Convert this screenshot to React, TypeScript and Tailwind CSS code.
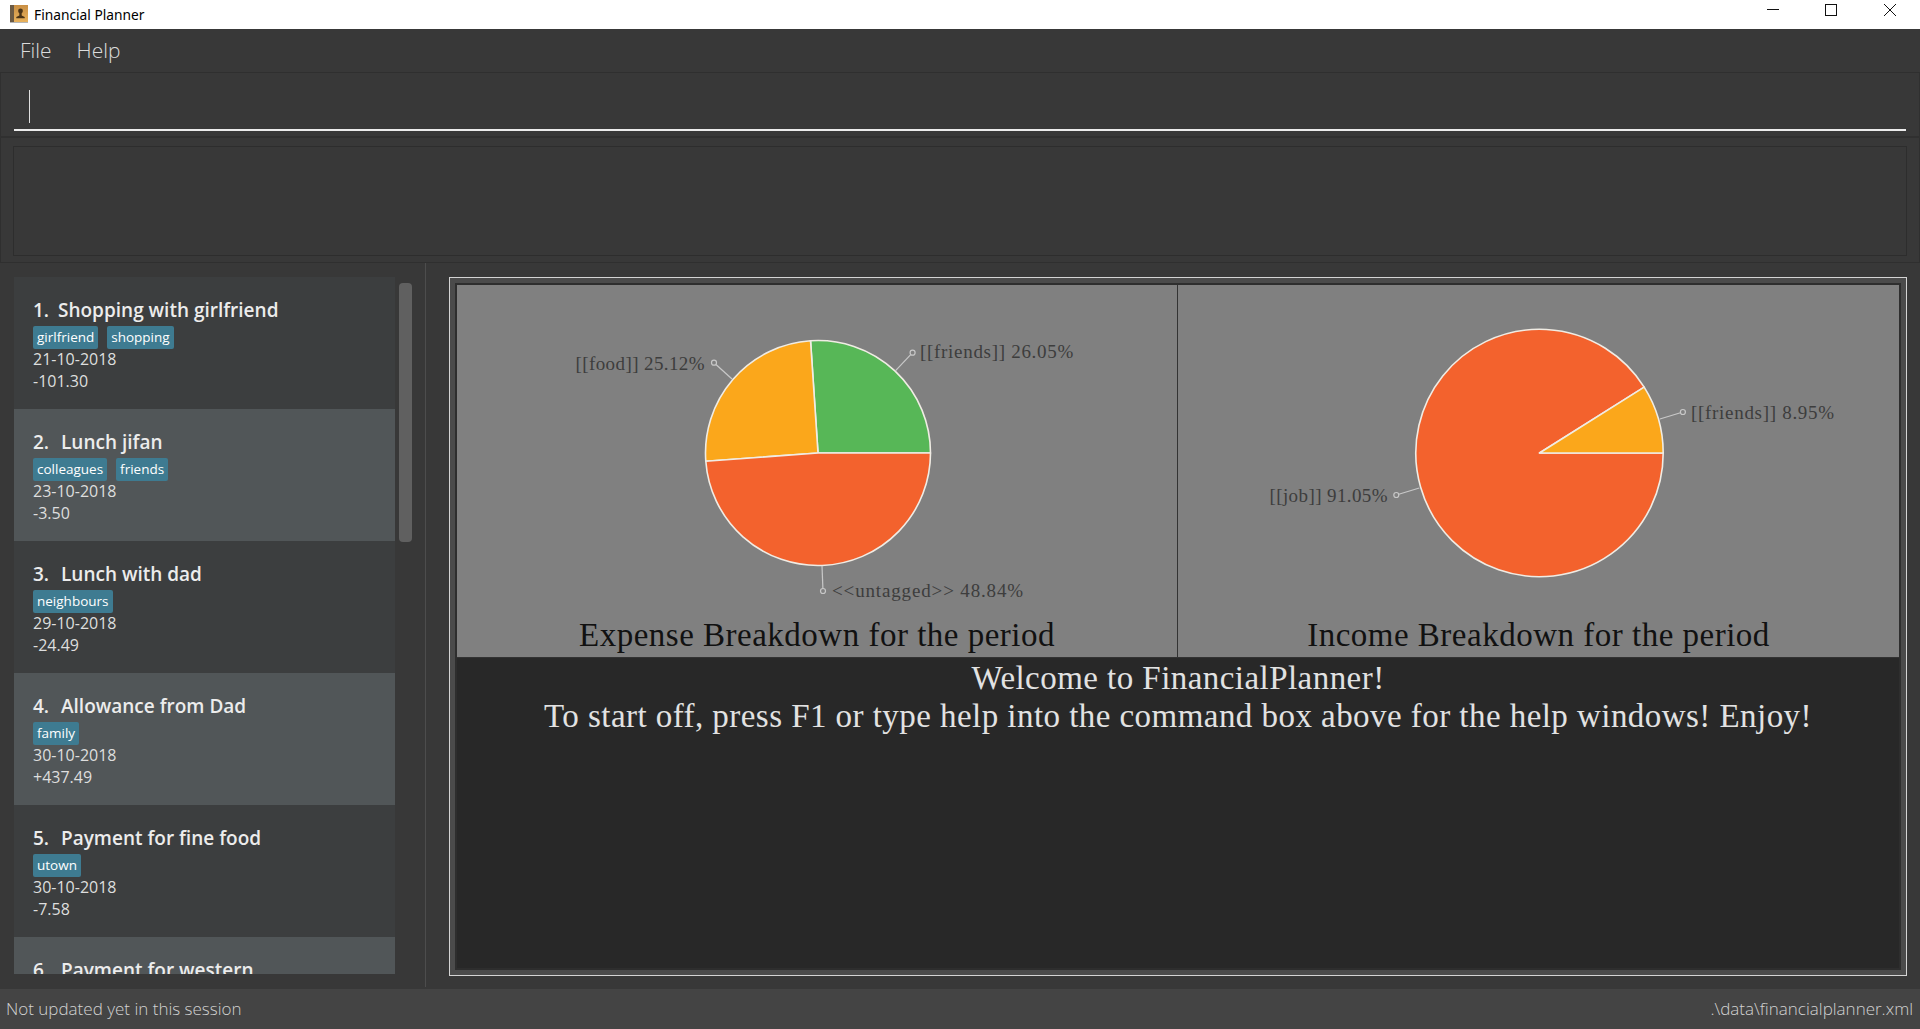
import React from "react";

const ui = "font-['Open_Sans','Noto_Sans',sans-serif]";
const rows: { t: string; tags: string[]; d?: string; a?: string }[] = [
  { t: "Shopping with girlfriend", tags: ["girlfriend", "shopping"], d: "21-10-2018", a: "-101.30" },
  { t: "Lunch jifan", tags: ["colleagues", "friends"], d: "23-10-2018", a: "-3.50" },
  { t: "Lunch with dad", tags: ["neighbours"], d: "29-10-2018", a: "-24.49" },
  { t: "Allowance from Dad", tags: ["family"], d: "30-10-2018", a: "+437.49" },
  { t: "Payment for fine food", tags: ["utown"], d: "30-10-2018", a: "-7.58" },
  { t: "Payment for western", tags: [] },
];

function pt(cx: number, cy: number, r: number, deg: number) {
  const a = (deg * Math.PI) / 180;
  return [cx + r * Math.cos(a), cy - r * Math.sin(a)];
}
function Slice({ cx, cy, r, from, to, fill }: { cx: number; cy: number; r: number; from: number; to: number; fill: string }) {
  const [x1, y1] = pt(cx, cy, r, from);
  const [x2, y2] = pt(cx, cy, r, to);
  const large = to - from > 180 ? 1 : 0;
  return <path d={`M${cx} ${cy}L${x1} ${y1}A${r} ${r} 0 ${large} 0 ${x2} ${y2}Z`} fill={fill} stroke="#f0ece4" strokeWidth="1.6" strokeLinejoin="round" />;
}
function Leader({ x1, y1, x2, y2 }: { x1: number; y1: number; x2: number; y2: number }) {
  return (
    <g>
      <line x1={x1} y1={y1} x2={x2} y2={y2} stroke="#c8c8c8" strokeWidth="1.2" />
      <circle cx={x1} cy={y1} r="2.5" fill="#808080" stroke="#c8c8c8" strokeWidth="1.2" />
    </g>
  );
}
function Label({ x, y, end, ls = 0.7, children }: { x: number; y: number; end?: boolean; ls?: number; children: string }) {
  return (
    <text x={x} y={y} fill="#3d3d3d" fontSize="19" letterSpacing={ls} textAnchor={end ? "end" : "start"} fontFamily="'Liberation Serif', serif">
      {children}
    </text>
  );
}

function ChartTitle({ children }: { children: string }) {
  return (
    <div className="h-[46px] flex items-center justify-center text-[33px] leading-none tracking-[0.5px] text-[#111111] font-['Liberation_Serif',serif]">
      {children}
    </div>
  );
}

export default function App() {
  return (
    <div className={`h-[1029px] w-[1920px] overflow-hidden flex flex-col bg-[#383838] ${ui}`}>
      {/* title bar */}
      <div className="h-[29px] bg-white flex items-center relative shrink-0">
        <svg className="ml-[10px] mb-[2px]" width="18" height="18" viewBox="0 0 18 18">
          <defs>
            <linearGradient id="g" x1="0" y1="0" x2="0" y2="1">
              <stop offset="0" stopColor="#c98f44" />
              <stop offset="1" stopColor="#e9b25c" />
            </linearGradient>
          </defs>
          <rect x="0" y="0" width="18" height="17" fill="url(#g)" />
          <rect x="0" y="0" width="4" height="17" fill="#6b5a45" />
          <rect x="0" y="17" width="18" height="1" fill="#b5b5b5" />
          <circle cx="10.5" cy="6" r="2.4" fill="#4a3418" />
          <path d="M9.3 8h2.4v2.4l3 1.6v1.2H6.3V12l3-1.6z" fill="#4a3418" />
        </svg>
        <span className="ml-[6px] text-[13.75px] text-black leading-none font-['Noto_Sans',sans-serif]">Financial Planner</span>
        <div className="ml-auto flex items-center h-full">
          <svg width="180" height="29" viewBox="1740 0 180 29" fill="none" stroke="#111" strokeWidth="1" shapeRendering="crispEdges">
            <path d="M1767 9.5h12" />
            <rect x="1825.5" y="4.5" width="11" height="11" />
            <path d="M1884 4l12 12M1896 4l-12 12" shapeRendering="auto" />
          </svg>
        </div>
      </div>

      {/* menu */}
      <div className="h-[44px] shrink-0 flex items-center pl-[20px] gap-[25px] text-[21px] font-light text-[#dcdcdc] border-b border-[#2f2f2f]">
        <span>File</span>
        <span>Help</span>
      </div>

      {/* command box */}
      <div className="h-[65px] shrink-0 border-b-2 border-l border-r border-[#303030] pl-[13px] pr-[13px] pt-[17px]">
        <div className="h-[41px] border-b-2 border-[#ececec]">
          <div className="ml-[15px] w-px h-[33px] bg-[#e0e0e0]" />
        </div>
      </div>

      {/* result */}
      <div className="h-[125px] shrink-0 border-b border-l border-r border-[#2f2f2f] px-[12px] pt-[8px]">
        <div className="h-[110px] border border-[#2d2d2d]" />
      </div>

      {/* split */}
      <div className="flex-1 min-h-0 flex">
        <div className="w-[426px] shrink-0 pl-[14px] pt-[14px] flex border-r border-[#4d4d4d] mb-[2px]">
          <div className="w-[381px] h-[697px] overflow-hidden shrink-0">
            {rows.map((r, i) => (
              <div key={i} className={`h-[132px] pl-[19px] pt-[20px] ${i % 2 ? "bg-[#515658]" : "bg-[#3c3e3f]"}`}>
                <div className="h-[26px] leading-[26px] text-[19px] font-semibold text-[#ececec] flex">
                  <span className={i === 0 ? "w-[25px] shrink-0" : "w-[28px] shrink-0"}>{`${i + 1}.`}</span>
                  <span>{r.t}</span>
                </div>
                {r.tags.length > 0 && (
                  <div className="flex gap-[9px] mt-[3px]">
                    {r.tags.map((t) => (
                      <span key={t} className="h-[23px] px-[4px] leading-[22px] text-[13.5px] rounded-[2px] bg-[#3e7b91] text-white">
                        {t}
                      </span>
                    ))}
                  </div>
                )}
                {r.d && <div className="h-[21px] leading-[21px] text-[16px] text-[#dedede]">{r.d}</div>}
                {r.a && <div className="h-[22px] leading-[22px] text-[16px] text-[#dedede]">{r.a}</div>}
              </div>
            ))}
          </div>
          <div className="ml-[4px] mt-[6px] w-[13px] h-[259px] rounded-[4px] bg-[#606060]" />
        </div>

        <div className="flex-1 min-w-0 pl-[23px] pr-[13px] pt-[14px] pb-[13px]">
          <div className="h-full border border-[#d4d4d4] bg-[#4b4b4b] p-[5px]">
            <div className="h-full border-2 border-[#2e2e2e] flex flex-col bg-[#282828]">
              <div className="grid grid-cols-2 h-[373px] shrink-0 bg-[#808080] border-b border-[#333333]">
                <div className="flex flex-col border-r border-[#333333] min-w-0">
                  <svg className="block" width="719" height="327" viewBox="457 285 719 327">
                    <Slice cx={818} cy={453} r={112.5} from={0} to={93.8} fill="#57b757" />
                    <Slice cx={818} cy={453} r={112.5} from={93.8} to={184.2} fill="#fba71b" />
                    <Slice cx={818} cy={453} r={112.5} from={184.2} to={360} fill="#f3622d" />
                    <Leader x1={912.6} y1={352.7} x2={895.6} y2={370.7} />
                    <Leader x1={714} y1={362.7} x2={732} y2={379} />
                    <Leader x1={823} y1={591} x2={822} y2={566} />
                    <Label x={920} y={358}>[[friends]] 26.05%</Label>
                    <Label x={705} y={370} end ls={0.4}>[[food]] 25.12%</Label>
                    <Label x={832} y={597} ls={0.85}>{"<<untagged>> 48.84%"}</Label>
                  </svg>
                  <ChartTitle>Expense Breakdown for the period</ChartTitle>
                </div>
                <div className="flex flex-col min-w-0">
                  <svg className="block" width="720" height="327" viewBox="1178.5 285 720 327">
                    <Slice cx={1540} cy={453} r={123.7} from={32.2} to={360} fill="#f3622d" />
                    <Slice cx={1540} cy={453} r={123.7} from={0} to={32.2} fill="#fba71b" />
                    <Leader x1={1683.4} y1={412} x2={1660.4} y2={419} />
                    <Leader x1={1396.8} y1={495} x2={1419.8} y2={488} />
                    <Label x={1691.5} y={419}>[[friends]] 8.95%</Label>
                    <Label x={1388.5} y={502} end ls={0.4}>[[job]] 91.05%</Label>
                  </svg>
                  <ChartTitle>Income Breakdown for the period</ChartTitle>
                </div>
              </div>
              <div className="flex-1 pt-[1px] text-center text-[33px] leading-[38px] tracking-[0.45px] text-[#e2e2e2] font-['Liberation_Serif',serif]">
                <div>Welcome to FinancialPlanner!</div>
                <div>To start off, press F1 or type help into the command box above for the help windows! Enjoy!</div>
              </div>
            </div>
          </div>
        </div>
      </div>

      {/* status */}
      <div className="h-[40px] shrink-0 bg-[#444444] flex items-center justify-between pl-[6px] pr-[7px] text-[17px] font-light text-[#d2d2d2]">
        <span>Not updated yet in this session</span>
        <span>.\data\financialplanner.xml</span>
      </div>
    </div>
  );
}
